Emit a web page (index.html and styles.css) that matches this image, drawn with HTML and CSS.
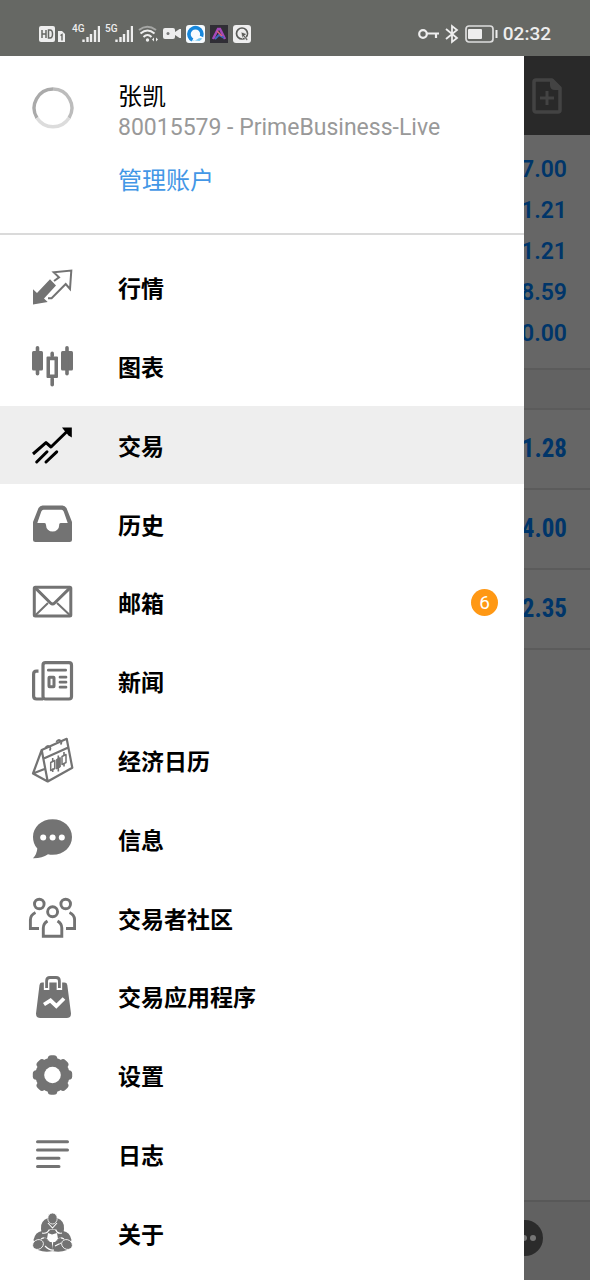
FILE: index.html
```html
<!DOCTYPE html>
<html lang="zh-CN">
<head>
<meta charset="utf-8">
<meta name="viewport" content="width=device-width, initial-scale=1">
<title>交易</title>
<link rel="stylesheet" href="styles.css">
</head>
<body>
<div class="phone">
  <header class="status">
    <div class="status-group">
      <svg width="28" height="20" viewBox="0 0 28 20"><rect x="0" y="2" width="16" height="16" rx="2" fill="#eee"/><path d="M3 6v8M7 6v8M3 10h4M9.500 6v8h1.500q2.500 0 2.500-4t-2.500-4z" fill="none" stroke="#666864" stroke-width="1.500"/><path d="M19 7h4l3 3v8h-7z" fill="#eee"/><path d="M21.500 11.500l1.500-1v6" fill="none" stroke="#666864" stroke-width="1.400"/></svg>
      <span class="signal"><span class="net">4G</span><svg width="18" height="20" viewBox="0 0 18 20"><path d="M1.500 15.500v2.500M5.500 13v5M9 10v8M13 6v12M17 2v16" stroke="#eee" stroke-width="2.400"/></svg></span>
      <span class="signal"><span class="net">5G</span><svg width="18" height="20" viewBox="0 0 18 20"><path d="M1.500 15.500v2.500M5.500 13v5M9 10v8M13 6v12M17 2v16" stroke="#eee" stroke-width="2.400"/></svg></span>
      <svg width="20" height="20" viewBox="0 0 20 20" fill="none" stroke="#eee" stroke-width="2"><path d="M1 6q8-6.500 17 0" stroke="#a5a6a4"/><path d="M2.500 9.500q7-6 14 0M5.500 13q4-4 8 0"/><circle cx="9.500" cy="16" r="1.700" fill="#eee" stroke="none"/><path d="M14 15.500l2-2v4zM20 15.500l-2-2v4z" fill="#eee" stroke="none"/></svg>
      <svg width="18" height="20" viewBox="0 0 18 20"><rect x="0" y="4" width="12" height="11" rx="2" fill="#eee"/><path d="M12 8l4.500-3H18v9h-1.500L12 11z" fill="#eee"/><circle cx="5" cy="9.500" r="1.500" fill="#777"/></svg>
      <svg width="19" height="20" viewBox="0 0 19 20"><rect x="0" y="1" width="19" height="18" rx="3" fill="#f7fbfe"/><path d="M15.500 12.500a6.500 6.500 0 1 0-9 3.500" fill="none" stroke="#1687dc" stroke-width="3.600"/><path d="M5 16q3 1.500 6-.5 2-2.500 5.500-1l-3 2.500z" fill="#75c7f2"/></svg>
      <svg width="18" height="20" viewBox="0 0 18 20"><rect x="0" y="1" width="18" height="18" fill="#302e35"/><path d="M3 15l5-10h2l5 10" fill="none" stroke="#a548ba" stroke-width="2.500"/><path d="M5 15l4-4 5 3" fill="none" stroke="#4268bd" stroke-width="1.800"/><path d="M7 7l5 5" stroke="#df627c" stroke-width="1.500"/></svg>
      <svg width="18" height="20" viewBox="0 0 18 20"><rect x="0" y="1" width="18" height="18" rx="3" fill="#eee"/><circle cx="9" cy="9.500" r="5.500" fill="none" stroke="#5a5c59" stroke-width="1.700"/><path d="M8 8l6 2-2.500 1.500 3.500 4-1.500 1-3-4-1 2z" fill="#5a5c59" stroke="#eee" stroke-width=".6"/></svg>
    </div>
    <div class="status-group">
      <svg width="21" height="20" viewBox="0 0 21 20" fill="none" stroke="#eee" stroke-width="2.200"><circle cx="5" cy="10" r="3.800"/><path d="M9 9.500h12M18 10v4"/></svg>
      <svg width="16" height="20" viewBox="0 0 16 20" fill="none" stroke="#eee" stroke-width="1.800"><path d="M2 5l11 9-5 4V2l5 4-11 9"/></svg>
      <svg width="33" height="20" viewBox="0 0 33 20"><rect x="1" y="2" width="27" height="16" rx="3" fill="none" stroke="#ddd" stroke-width="1.700"/><rect x="3" y="5" width="14" height="10" rx="1" fill="#eee"/><path d="M31.500 6v8" stroke="#eee" stroke-width="2"/></svg>
      <time class="clock">02:32</time>
    </div>
  </header>

  <div class="stage">
    <main class="trade">
      <div class="toolbar">
        <button class="icon-button" aria-label="新订单"><svg width="30" height="36" viewBox="0 0 30 36"><path d="M4 2H20L28 10V32a2 2 0 0 1-2 2H4a2 2 0 0 1-2-2V4a2 2 0 0 1 2-2z" fill="none" stroke="#434343" stroke-width="3.500" stroke-linejoin="round"/><path d="M18 2l3-1 8 8v3h-6q-5 0-5-5z" fill="#434343"/><path d="M15 13v14M8 20h14" stroke="#434343" stroke-width="3"/></svg></button>
      </div>
      <div class="summary">
        <span>7.00</span><span>1.21</span><span>1.21</span><span>8.59</span><span>0.00</span>
      </div>
      <div class="band"></div>
      <div class="position">1.28</div>
      <div class="position">4.00</div>
      <div class="position">2.35</div>
      <div class="tabbar">
        <button class="icon-button" aria-label="信息"><svg width="40" height="40" viewBox="0 0 40 40"><circle cx="20" cy="20" r="18" fill="#2b2b2b"/><g fill="#757575"><circle cx="10" cy="20" r="3"/><circle cx="19" cy="20" r="3"/><circle cx="28" cy="20" r="3"/></g></svg></button>
      </div>
    </main>

    <aside class="drawer">
      <section class="account">
        <svg class="avatar" width="42" height="42" viewBox="0 0 42 42" fill="none" stroke-width="3.400"><path d="M5 31A19 19 0 0 1 21 2" stroke="#aaa"/><path d="M21 2A19 19 0 0 1 37 31" stroke="#bcbcbc"/><path d="M37 31A19 19 0 0 1 5 31" stroke="#dcdcdc"/></svg>
        <div class="account-text">
          <div class="name">张凯</div>
          <div class="server">80015579 - PrimeBusiness-Live</div>
          <a class="manage" href="#">管理账户</a>
        </div>
      </section>
      <nav class="menu">
        <a class="item" href="#"><svg class="icon" viewBox="0 0 48 48"><path d="M5 26.300L9 30 22 16.300 28 22.600 16 35.600 19.700 39 5 41.600z" fill="#737373"/><path d="M26 18L31 14.300 25.700 9.300 43.300 7.500 42 26 37.700 21 23.600 35.300H20" fill="none" stroke="#737373" stroke-width="2"/></svg><span>行情</span></a>
        <a class="item" href="#"><svg class="icon" viewBox="0 0 48 48" fill="#737373"><rect x="4" y="9" width="11" height="19.500" rx="1.500"/><rect x="7.700" y="4" width="3.600" height="29.600" rx="1.800"/><rect x="33" y="9" width="12" height="19.500" rx="1.500"/><rect x="37.200" y="4" width="3.600" height="29.600" rx="1.800"/><path fill-rule="evenodd" d="M19.500 14.600h9.500q1 0 1 1V35q0 1-1 1h-9.500q-1 0-1-1V15.600q0-1 1-1zM22 18.200V32.600h4.500V18.200z"/><rect x="22.400" y="9.600" width="3.600" height="6" rx="1.800"/><rect x="22.400" y="35" width="3.600" height="9.500" rx="1.800"/></svg><span>图表</span></a>
        <a class="item active" href="#" aria-current="page"><svg class="icon" viewBox="0 0 48 48" fill="none" stroke="#000" stroke-width="3"><path d="M5 33L18 21.600 23 26 41 8.500" stroke-linejoin="round"/><path d="M34 6.500H43.800V16.500L40.500 14.500 36.500 9.800z" fill="#000" stroke="none"/><path d="M8.700 41L19 30.800M18 41L28.700 30.800" stroke-linecap="round"/></svg><span>交易</span></a>
        <a class="item" href="#"><svg class="icon" viewBox="0 0 48 48"><path fill="#737373" fill-rule="evenodd" d="M14.500 5.400H34.500Q37 5.400 38.500 8L44 22V39.500Q44 42 41.500 42H7.500Q5 42 5 39.500V22L10.500 8Q12 5.400 14.500 5.400zM15.500 9.700Q14 9.700 13.300 11.500L9.300 23H16.500Q18 23 18 25A6.600 6.600 0 0 0 31.200 25Q31 23 32.700 23H39.700L35.700 11.500Q35 9.700 33.500 9.700z"/></svg><span>历史</span></a>
        <a class="item" href="#"><svg class="icon" viewBox="0 0 48 48" fill="none" stroke="#737373" stroke-width="3"><rect x="6.300" y="9.200" width="36.500" height="28.800" rx="1"/><path d="M7 9.600L22.500 25Q24.600 27 26.600 25L42.300 9.600"/><path d="M7.700 37L20 25M41.700 37L29 25" stroke-width="2"/></svg><span>邮箱</span><b class="badge">6</b></a>
        <a class="item" href="#"><svg class="icon" viewBox="0 0 48 48" fill="none" stroke="#737373" stroke-width="3.200"><rect x="15" y="5.700" width="28.500" height="36.300" rx="2.500"/><path d="M10.500 14.200H8.500Q5.600 14.200 5.600 17.200V39Q5.600 42 8.600 42H15"/><path d="M20.300 13.200H37.700M32 20.200H38M32 25.200H38M32 30.200H38" stroke-width="2.700" stroke-linecap="round"/><rect x="21" y="20.200" width="5" height="9.500" stroke-width="3" rx=".5"/></svg><span>新闻</span></a>
        <a class="item" href="#"><svg class="icon" viewBox="0 0 48 48" fill="none" stroke="#737373" stroke-width="2.200" stroke-linejoin="round"><path d="M13.700 14L38.700 2.800 44.300 31.800 19.700 45.500 5 37.500zL19.700 45.500M14.700 23L40.300 11.400M5 37.500L16.500 33"/><path d="M17.500 12a2.500 2.500 0 1 1 4 2.500M28.500 6a2.500 2.500 0 1 1 4 2.500" stroke-width="1.800"/><path d="M24.700 22v4M24.700 32.500v3.500M36 16v4M36 27v3.500M30.300 19.500v16" stroke-width="1.600"/><path d="M22.700 26.500l4-2v8l-4 2zM34 20.500l4-2v8l-4 2z" stroke-width="1.500"/><path d="M28.300 23.500l4-2v9.500l-4 2z" fill="#737373" stroke-width="1"/></svg><span>经济日历</span></a>
        <a class="item" href="#"><svg class="icon" viewBox="0 0 48 48"><path d="M24.600 4.300C35.600 4.300 44 12 44 22S35.600 39.800 24.600 39.800Q22 39.800 20 39.200Q14 43.500 5 43.300Q8.800 39.500 9.300 33.500Q5 29 5 22C5 12 13.600 4.300 24.600 4.300z" fill="#737373"/><g fill="#fff"><circle cx="15.200" cy="22.500" r="3"/><circle cx="24.600" cy="22.500" r="3"/><circle cx="33.800" cy="22.500" r="3"/></g></svg><span>信息</span></a>
        <a class="item" href="#"><svg class="icon" viewBox="0 0 48 48" fill="none" stroke="#737373" stroke-width="2.900"><circle cx="11.300" cy="10" r="4.800"/><circle cx="37.700" cy="10" r="4.800"/><circle cx="24.600" cy="17.800" r="5"/><path d="M19.500 27Q15.300 29.500 15.300 34V42.300H33.800V34Q33.800 29.500 29.500 27M7.500 18.500Q2.400 21 2.400 26V34.500H11M41.500 18.500Q46.600 21 46.600 26V34.500H38"/></svg><span>交易者社区</span></a>
        <a class="item" href="#"><svg class="icon" viewBox="0 0 48 48"><path d="M14 10.600H36.500Q39 10.600 39.300 13L43 41.500Q43 46 39 46H12Q8 46 8 41.500L11.500 13Q12 10.600 14 10.600z" fill="#737373"/><path d="M18.600 18V9Q18.600 5.500 22 5.500H28Q31.400 5.500 31.400 9V18" fill="none" stroke="#fff" stroke-width="5.500"/><path d="M18.600 16V9Q18.600 5.500 22 5.500H28Q31.400 5.500 31.400 9V16" fill="none" stroke="#737373" stroke-width="2.800"/><path d="M16 32.500L22.500 28.500 28.300 34 36 26.500" fill="none" stroke="#fff" stroke-width="3.800"/></svg><span>交易应用程序</span></a>
        <a class="item" href="#"><svg class="icon" viewBox="0 0 48 48"><g fill="#737373"><circle cx="24.500" cy="24" r="17.200"/><rect x="19.700" y="4.300" width="9.600" height="39.400" rx="3.500"/><rect x="19.700" y="4.300" width="9.600" height="39.400" rx="3.500" transform="rotate(45 24.500 24)"/><rect x="19.700" y="4.300" width="9.600" height="39.400" rx="3.500" transform="rotate(90 24.500 24)"/><rect x="19.700" y="4.300" width="9.600" height="39.400" rx="3.500" transform="rotate(135 24.500 24)"/></g><circle cx="24.500" cy="24" r="8.300" fill="#fff"/></svg><span>设置</span></a>
        <a class="item" href="#"><svg class="icon" viewBox="0 0 48 48"><path d="M9.500 11.800H39.500M9.500 20H39.500M9.500 28.200H31M9.500 36.500H31" stroke="#737373" stroke-width="3" stroke-linecap="round"/></svg><span>日志</span></a>
        <a class="item" href="#"><svg class="icon" viewBox="0 0 48 48"><g fill="#737373"><path d="M13 20Q12 12 20 9Q24.500 7 29 9Q37 12 36 20L35 27H14z"/><path d="M5.500 31Q7 23 14 22L23 28 25 42Q17 44 10 41z"/><path d="M43.500 31Q42 23 35 22L26 28 24 42Q32 44 39 41z"/></g><g fill="#737373" stroke="#fff" stroke-width=".8"><ellipse cx="24.500" cy="9.500" rx="4.700" ry="5.500"/><ellipse cx="10" cy="35.500" rx="5.600" ry="4.700" transform="rotate(-30 10 35.500)"/><ellipse cx="39" cy="35.500" rx="5.600" ry="4.700" transform="rotate(30 39 35.500)"/></g><path d="M20 14l4.500 5 4.500-5M14 24q5 1 7-3h7q1 4 6 3M13 30q5-3 6 2M36 30q-5-3-6 2M17 37q5 5 9 4M33 34l-6 3" fill="none" stroke="#fff" stroke-width="1.100"/><path d="M20 24l4 1.500 5-1.500 1 6-3 3h-5l-3-3z" fill="#fff"/><path d="M22 21h5v2h-5zM16 28l4 3-3 4zM33 28l-4 3 3 4z" fill="#737373"/></svg><span>关于</span></a>
      </nav>
    </aside>
  </div>
</div>
</body>
</html>
```
FILE: styles.css
```css
* { box-sizing: border-box; }

body {
  margin: 0;
  font-family: Roboto, "Noto Sans CJK SC", sans-serif;
  color: #000;
}

a { color: inherit; text-decoration: none; }
svg { display: block; flex: none; }

.phone {
  display: flex;
  flex-direction: column;
  min-height: 100vh;
}

.status {
  display: flex;
  justify-content: space-between;
  height: 56px;
  padding: 12px 39px 0;
  background: #666864;
  color: #eee;
}

.status-group { display: flex; align-items: center; gap: 5px; }
.signal { display: flex; }
.net { width: 10px; font-size: 10px; line-height: 10px; font-weight: 500; white-space: nowrap; }
.clock { font-size: 19px; font-weight: 500; line-height: 24px; }

.stage {
  position: relative;
  flex: 1;
  display: flex;
  flex-direction: column;
}

.trade {
  flex: 1;
  display: flex;
  flex-direction: column;
  background: #666;
  color: #003569;
}

.icon-button { padding: 0; border: 0; background: none; }

.toolbar {
  display: flex;
  align-items: center;
  justify-content: flex-end;
  height: 79px;
  padding-right: 28px;
  background: #292929;
}

.summary {
  display: flex;
  flex-direction: column;
  padding: 14px 23px;
  border-bottom: 2px solid #5b5b5b;
  font-size: 23px;
  font-weight: 600;
  line-height: 41px;
  text-align: right;
}

.band { height: 40px; background: #626262; border-bottom: 2px solid #5b5b5b; }

.position {
  padding: 0 23px;
  border-bottom: 2px solid #5b5b5b;
  font-family: "Roboto Condensed", Roboto, sans-serif;
  font-size: 25px;
  font-weight: 700;
  line-height: 78px;
  text-align: right;
}

.tabbar {
  display: flex;
  align-items: center;
  justify-content: flex-end;
  height: 80px;
  margin-top: auto;
  padding: 0 45px 6px 0;
  border-top: 2px solid #585858;
  background: #616161;
}

.drawer {
  position: absolute;
  inset: 0 66px 0 0;
  display: flex;
  flex-direction: column;
  background: #fff;
}

.account {
  display: flex;
  gap: 44px;
  padding: 24px 32px 34px;
  border-bottom: 2px solid #dadada;
}

.avatar { margin-top: 7px; }
.name { font-size: 24px; line-height: 34px; }
.server { color: #999; font-size: 23px; line-height: 28px; white-space: nowrap; }
.manage { display: block; margin-top: 22px; color: #4397e6; font-size: 24px; line-height: 35px; }

.menu {
  flex: 1;
  display: grid;
  grid-auto-rows: 1fr;
  padding: 13px 0 8px;
}

.item {
  display: flex;
  align-items: center;
  gap: 42px;
  padding: 0 26px 0 28px;
  font-size: 23px;
  font-weight: 700;
}

.active { background: #eee; }
.icon { width: 48px; height: 48px; }

.badge {
  width: 27px;
  margin-left: auto;
  border-radius: 50%;
  background: #ff9814;
  color: #fff;
  font-size: 19px;
  font-weight: 400;
  line-height: 27px;
  text-align: center;
}
```
